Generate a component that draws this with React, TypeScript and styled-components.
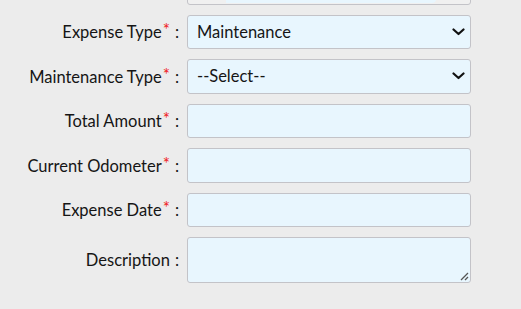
import React from "react";
import styled, { createGlobalStyle } from "styled-components";

const Global = createGlobalStyle`
  html, body { margin: 0; padding: 0; background: #ececec; }
  body { font-family: "Lato", "Open Sans", sans-serif; overflow: hidden; }
  #root { width: 521px; height: 309px; overflow: hidden; }
`;

const Page = styled.div`
  width: 521px;
  height: 309px;
  background: #ececec;
  overflow: hidden;
`;

const Form = styled.div`
  display: grid;
  grid-template-columns: 179px 284px;
  column-gap: 8px;
  row-gap: 10px;
  margin-top: -30px;
  align-items: center;
`;

const Label = styled.label`
  text-align: right;
  font-size: 16.5px;
  color: #151515;
  white-space: nowrap;
`;

const Req = styled.span`
  color: #f0201a;
  font-size: 17px;
  position: relative;
  top: -2px;
  margin-left: 1px;
`;

const Colon = styled.span`
  margin-left: 5px;
`;

const fieldBase = `
  box-sizing: border-box;
  width: 284px;
  border: 1px solid #c3c3c8;
  border-radius: 3px;
  background: #e8f6fe;
  font-family: "Lato", "Open Sans", sans-serif;
  font-size: 16.5px;
  color: #151515;
`;

const TopBox = styled.div`
  ${fieldBase}
  height: 34.5px;
  background: #f0f0f0;
  position: relative;
  overflow: hidden;
`;

const TopInner = styled.div`
  position: absolute;
  left: 38px;
  width: 210px;
  bottom: 1px;
  height: 20px;
  background: #e8f6fe;
  border-bottom-right-radius: 4px;
`;

const SelectBox = styled.div`
  ${fieldBase}
  height: 34.5px;
  display: flex;
  align-items: center;
  justify-content: space-between;
  padding: 0 5px 0 9px;
`;

const InputBox = styled.div`
  ${fieldBase}
  height: 34.5px;
`;

const TextArea = styled.div`
  ${fieldBase}
  height: 46px;
  position: relative;
`;

const Grip = styled.svg`
  position: absolute;
  right: 1px;
  bottom: 1px;
`;

const Chevron = () => (
  <svg width="13" height="8" viewBox="0 0 13 8">
    <path d="M1.5 1.5 L6.5 6 L11.5 1.5" fill="none" stroke="#111" strokeWidth="2.2" strokeLinecap="round" strokeLinejoin="round" />
  </svg>
);

const Select = ({ value }: { value: string }) => (
  <SelectBox>
    <span>{value}</span>
    <Chevron />
  </SelectBox>
);

const Lbl = ({ text, req }: { text: string; req?: boolean }) => (
  <Label>
    {text}
    {req && <Req>*</Req>}
    <Colon>:</Colon>
  </Label>
);

export default function App() {
  return (
    <Page>
      <Global />
      <Form>
        <span />
        <TopBox>
          <TopInner />
        </TopBox>

        <Lbl text="Expense Type" req />
        <Select value="Maintenance" />

        <Lbl text="Maintenance Type" req />
        <Select value="--Select--" />

        <Lbl text="Total Amount" req />
        <InputBox />

        <Lbl text="Current Odometer" req />
        <InputBox />

        <Lbl text="Expense Date" req />
        <InputBox />

        <Lbl text="Description" />
        <TextArea>
          <Grip width="10" height="10" viewBox="0 0 10 10">
            <path d="M2 9 L9 2 M6 9 L9 6" stroke="#555" strokeWidth="1.3" />
          </Grip>
        </TextArea>
      </Form>
    </Page>
  );
}
